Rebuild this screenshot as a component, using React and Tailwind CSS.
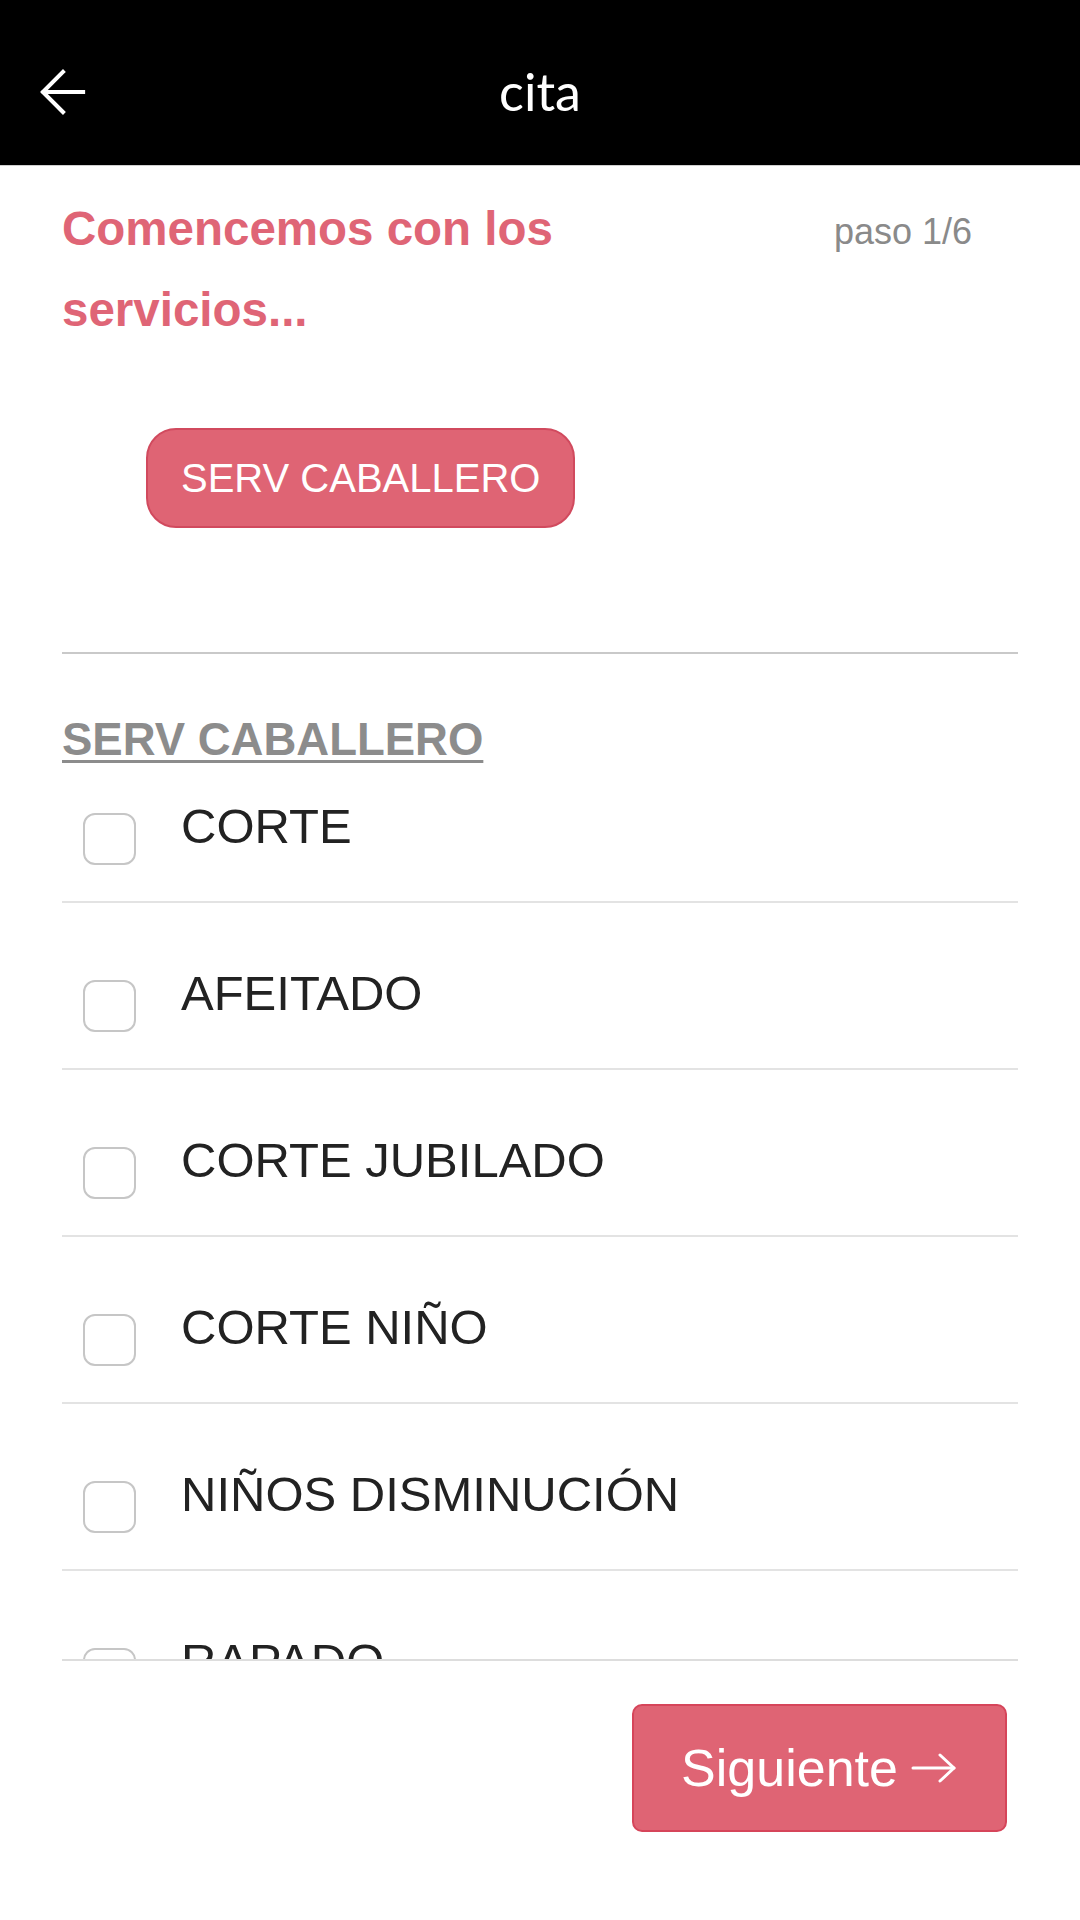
const SERVICES = ['CORTE', 'AFEITADO', 'CORTE JUBILADO', 'CORTE NIÑO', 'NIÑOS DISMINUCIÓN', 'RAPADO']

function BackArrow() {
  return (
    <svg width="72" height="72" viewBox="0 0 24 24" fill="none" stroke="white" strokeWidth="1.35" strokeLinecap="square" strokeLinejoin="miter">
      <path d="M12 5.3 5.3 12 12 18.7" />
      <path d="M5.6 12H18.7" />
    </svg>
  )
}

function RightArrow() {
  return (
    <svg width="48" height="32" viewBox="0 0 48 32" fill="none" stroke="white" strokeWidth="3" strokeLinecap="round" strokeLinejoin="round">
      <path d="M3 16h41" />
      <path d="M30 3l14 13-14 13" />
    </svg>
  )
}

function ServiceRow({ label, first }) {
  return (
    <div className={`flex items-start pb-[36px] border-b-2 border-[#e3e3e3] ${first ? 'pt-[32px]' : 'pt-[62px]'}`}>
      <div className="mt-[15px] ml-[21px] w-[53px] h-[52px] shrink-0 rounded-[12px] border-2 border-[#c6c6c6] bg-white" />
      <span className="ml-[45px] text-[49px] leading-[56px] text-[#222222] whitespace-nowrap">{label}</span>
    </div>
  )
}

export default function App() {
  return (
    <div className="w-[1080px] h-[1920px] bg-white overflow-hidden" style={{ fontFamily: '"Liberation Sans", Arial, sans-serif' }}>
      <div className="relative h-[166px] bg-black border-b border-[#cfcfcf] flex items-center justify-center">
        <div className="absolute left-[27px] top-[56px]">
          <BackArrow />
        </div>
        <span className="text-white text-[52px] leading-none pt-[16px]" style={{ fontFamily: 'Lato, "Open Sans", sans-serif' }}>cita</span>
      </div>

      <div className="h-[1493px] overflow-hidden px-[62px]">
        <div className="flex justify-between items-start pt-[22px]">
          <h1 className="w-[580px] text-[47.5px] leading-[81px] font-bold text-[#df6576]">
            Comencemos con los servicios...
          </h1>
          <span className="pt-[3px] pr-[46px] text-[36px] leading-[81px] text-[#8a8a8a]">paso 1/6</span>
        </div>

        <div className="mt-[78px] ml-[84px]">
          <button className="h-[100px] px-[33px] rounded-[30px] bg-[#df6474] border-2 border-[#d14a5e] text-white text-[40px] leading-none">
            SERV CABALLERO
          </button>
        </div>

        <div className="mt-[124px] h-[2px] bg-[#c9c9c9]" />

        <h2 className="mt-[60px] text-[45.5px] leading-[52px] font-bold text-[#8c8c8c] underline decoration-[3px] underline-offset-[5px]">
          SERV CABALLERO
        </h2>

        {SERVICES.map((s, i) => (
          <ServiceRow key={s} label={s} first={i === 0} />
        ))}
      </div>

      <div className="mx-[62px] h-[2px] bg-[#dddddd]" />

      <div className="flex justify-end pr-[73px] mt-[43px]">
        <button className="w-[375px] h-[128px] rounded-[10px] bg-[#df6474] border-2 border-[#d6455a] flex items-center justify-center gap-[12px] text-white text-[52px] leading-none">
          <span>Siguiente</span>
          <RightArrow />
        </button>
      </div>
    </div>
  )
}
